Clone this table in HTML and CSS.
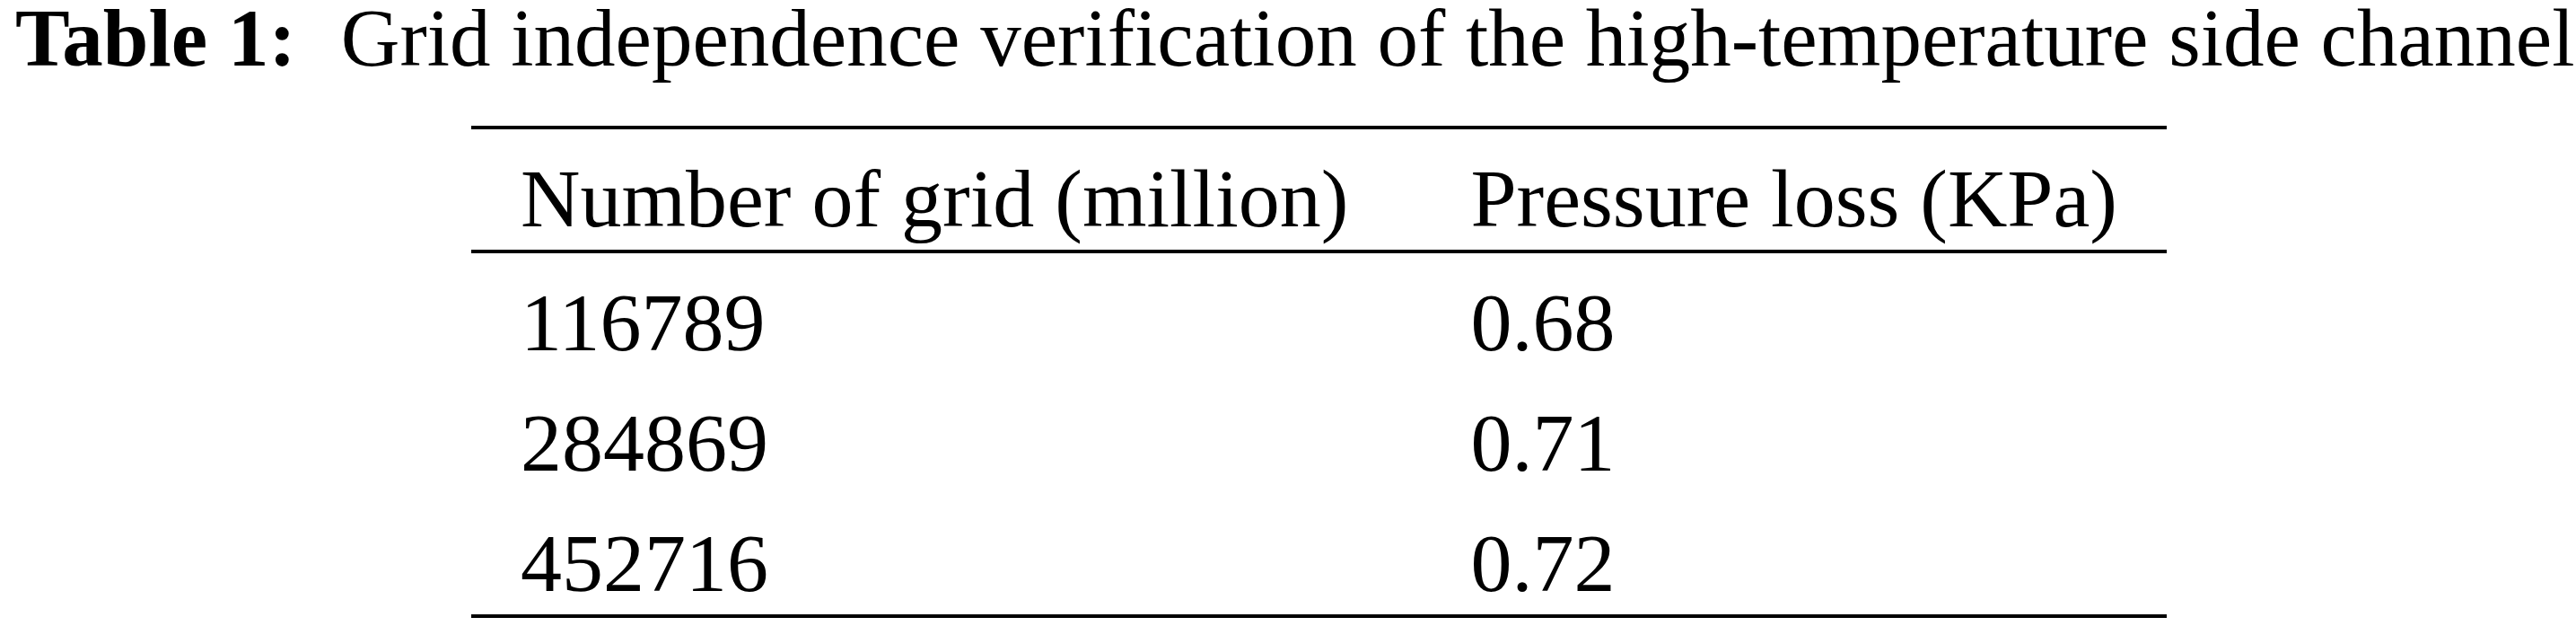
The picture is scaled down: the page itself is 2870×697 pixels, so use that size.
FILE: index.html
```html
<!DOCTYPE html>
<html lang="en">
<head>
    <meta charset="UTF-8">
    <title>Table 1 - Grid independence verification</title>
    <link rel="stylesheet" href="styles.css">
</head>
<body>
    <div class="caption">
        <span class="caption-label">Table 1:</span>Grid independence verification of the high-temperature side channel
    </div>

    <table class="grid-table">
        <thead>
            <tr>
                <th class="col-grid">Number of grid (million)</th>
                <th class="col-loss">Pressure loss (KPa)</th>
            </tr>
        </thead>
        <tbody>
            <tr>
                <td>116789</td>
                <td>0.68</td>
            </tr>
            <tr>
                <td>284869</td>
                <td>0.71</td>
            </tr>
            <tr>
                <td>452716</td>
                <td>0.72</td>
            </tr>
        </tbody>
    </table>
</body>
</html>
```

FILE: styles.css
```css
body {
    margin: 0;
    background: #fff;
    color: #000;
    font-family: 'Liberation Serif', 'Times New Roman', serif;
}
.caption {
    font-size: 91px;
    line-height: 85px;
    padding-left: 17px;
    white-space: nowrap;
}
.caption-label {
    font-weight: bold;
    margin-right: 50px;
}
.grid-table {
    margin: 55px 0 0 525px;
    width: 1889px;
    border-collapse: collapse;
    font-size: 92px;
}
.grid-table th,
.grid-table td {
    text-align: left;
    font-weight: normal;
    padding: 20px 55px 0;
    line-height: 114px;
    white-space: nowrap;
}
.grid-table th {
    border-top: 4px solid #000;
    border-bottom: 4px solid #000;
}
.grid-table tbody tr:last-child td {
    border-bottom: 4px solid #000;
}
.col-grid {
    width: 957px;
}
```
